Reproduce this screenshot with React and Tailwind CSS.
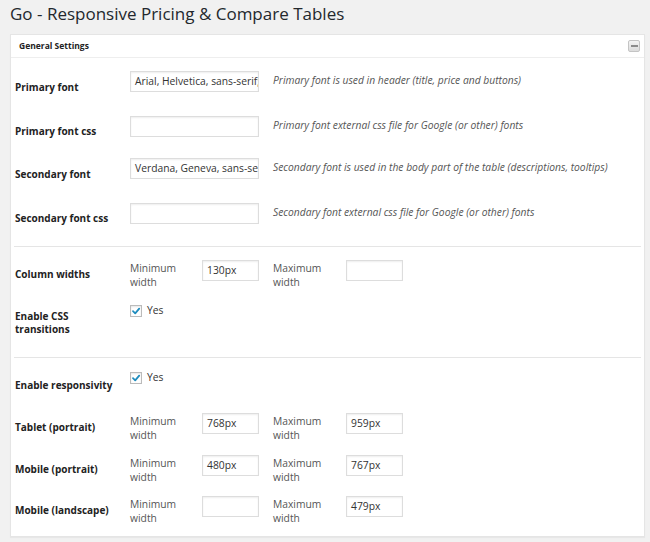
import React from "react";

const font = { fontFamily: '"Open Sans", "Noto Sans", sans-serif' };

function Input({ value = "", w = "w-[129px]" }) {
  return (
    <div className={`${w} h-[21px] border border-[#dddddd] bg-white shadow-[inset_0_1px_2px_rgba(0,0,0,0.07)] flex items-center pl-[4px] overflow-hidden whitespace-nowrap text-[10.3px] text-[#333]`}>
      {value}
    </div>
  );
}

function Check() {
  return (
    <div className="flex items-center gap-[5px]">
      <div className="w-[12px] h-[12px] border border-[#bbbbbb] bg-white shadow-[inset_0_1px_2px_rgba(0,0,0,0.1)] flex items-center justify-center">
        <svg width="10" height="10" viewBox="0 0 10 10">
          <path d="M2 5.2 L4.2 7.3 L8.2 2.6" stroke="#1e8cbe" strokeWidth="1.8" fill="none" strokeLinecap="round" strokeLinejoin="round" />
        </svg>
      </div>
      <span className="text-[10.3px] text-[#333]">Yes</span>
    </div>
  );
}

const labelBase = "w-[119px] pl-[4px] text-[10px] font-bold text-[#222]";
const labelCls = `${labelBase} leading-[15px]`;

function FontRow({ label, value, desc, top = "pt-[7px]" }) {
  return (
    <div className="flex h-[43.5px]">
      <div className={`${labelCls} pt-[16px]`}>{label}</div>
      <div className={`flex ${top}`}>
        <Input value={value} />
        <div className="ml-[14px] pt-[2px] text-[10.3px] italic text-[#555] leading-[15px] whitespace-nowrap">{desc}</div>
      </div>
    </div>
  );
}

function WidthPair({ min, max }) {
  return (
    <div className="flex">
      <div className="w-[72px] text-[10.3px] text-[#555] leading-[14px] pt-[1px]">Minimum<br />width</div>
      <Input value={min} w="w-[57px]" />
      <div className="w-[73px] ml-[14px] text-[10.3px] text-[#555] leading-[14px] pt-[1px]">Maximum<br />width</div>
      <Input value={max} w="w-[57px]" />
    </div>
  );
}

function WidthRow({ label, min, max, h }) {
  return (
    <div className={`flex ${h}`}>
      <div className={`${labelCls} pt-[7px]`}>{label}</div>
      <WidthPair min={min} max={max} />
    </div>
  );
}

export default function App() {
  return (
    <div className="w-[650px] h-[542px] bg-[#f1f1f1] overflow-hidden" style={font}>
      <div className="pl-[10px] pt-[1px] h-[34px] text-[17px] text-[#23282d] leading-[26px]">
        Go - Responsive Pricing &amp; Compare Tables
      </div>
      <div className="ml-[10px] w-[635px] h-[503px] bg-white border border-[#e5e5e5] shadow-[0_1px_1px_rgba(0,0,0,0.04)]">
        <div className="h-[23px] border-b border-[#eeeeee] flex items-center justify-between pl-[8px] pr-[4px]">
          <span className="text-[8.5px] font-bold text-[#222]">General Settings</span>
          <div className="w-[12px] h-[12px] rounded-[2px] border border-[#c4c4c4] bg-gradient-to-b from-[#f4f4f4] to-[#dcdcdc] flex items-center justify-center">
            <div className="w-[7px] h-[2px] bg-[#8c8c8c]" />
          </div>
        </div>
        <div className="pt-[6px]">
          <FontRow label="Primary font" value="Arial, Helvetica, sans-serif;" desc="Primary font is used in header (title, price and buttons)" />
          <FontRow label="Primary font css" value="" desc="Primary font external css file for Google (or other) fonts" top="pt-[8px]" />
          <FontRow label="Secondary font" value="Verdana, Geneva, sans-serif;" desc="Secondary font is used in the body part of the table (descriptions, tooltips)" />
          <FontRow label="Secondary font css" value="" desc="Secondary font external css file for Google (or other) fonts" top="pt-[8px]" />
        </div>
        <div className="h-[8px]" />
        <div className="mx-[3px] border-t border-[#e5e5e5]" />
        <div className="pt-[13px]">
          <WidthRow label="Column widths" min="130px" max="" h="h-[42px]" />
          <div className="flex h-[55px]">
            <div className={`${labelBase} pt-[8px] leading-[13px]`}>Enable CSS<br />transitions</div>
            <div className="pt-[1px]"><Check /></div>
          </div>
        </div>
        <div className="mx-[3px] border-t border-[#e5e5e5]" />
        <div className="pt-[12px]">
          <div className="flex h-[43px]">
            <div className={`${labelCls} pt-[8px]`}>Enable responsivity</div>
            <div><Check /></div>
          </div>
          <WidthRow label="Tablet (portrait)" min="768px" max="959px" h="h-[42px]" />
          <WidthRow label="Mobile (portrait)" min="480px" max="767px" h="h-[41px]" />
          <WidthRow label="Mobile (landscape)" min="" max="479px" h="h-[41px]" />
        </div>
      </div>
    </div>
  );
}
